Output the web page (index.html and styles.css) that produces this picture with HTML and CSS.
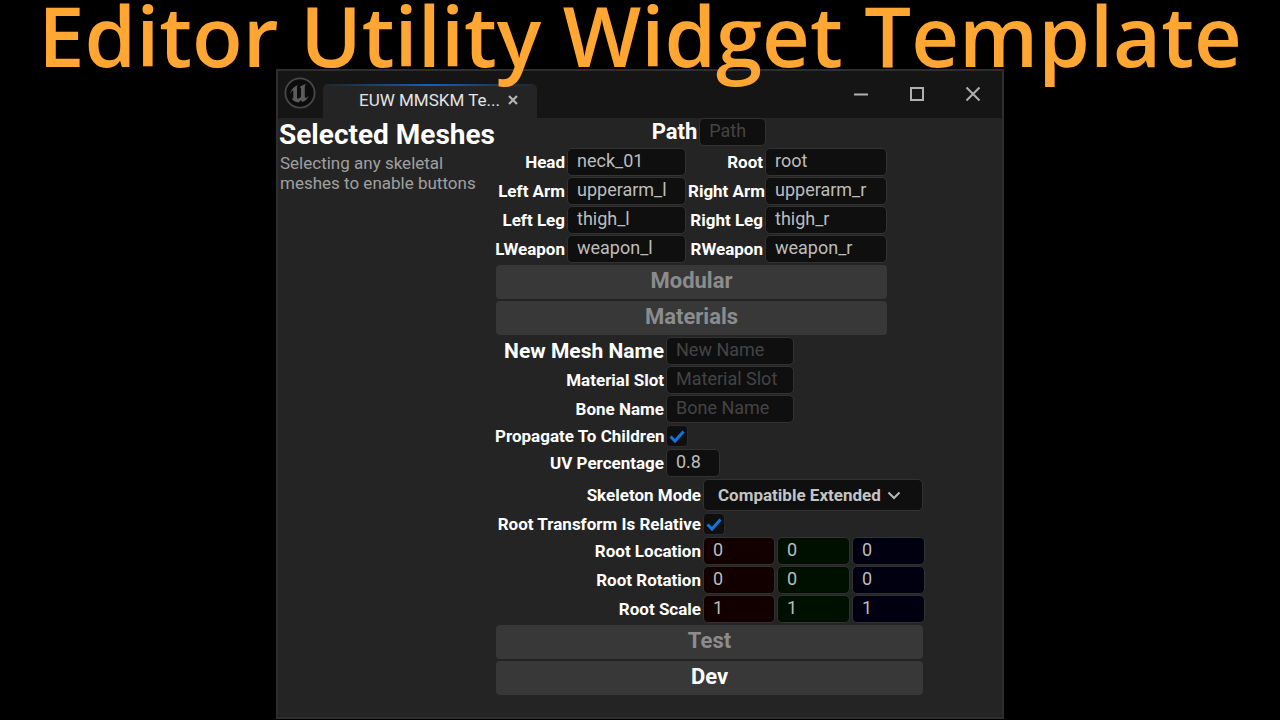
FILE: index.html
```html
<!DOCTYPE html>
<html lang="en">
<head>
<meta charset="utf-8">
<meta name="viewport" content="width=device-width, initial-scale=1">
<title>Editor Utility Widget Template</title>
<link rel="stylesheet" href="styles.css">
</head>
<body>
<h1 class="banner">Editor Utility Widget Template</h1>
<main class="window">
  <header class="titlebar">
    <svg class="logo" viewBox="0 0 32 32" aria-hidden="true">
      <circle cx="16" cy="16" r="14.6" fill="#0c0c0c" stroke="#484848" stroke-width="1.8"/>
      <path d="M6 17.5C7 12.500 10 9.500 14.500 7.800C13 9 13 9.600 13 10.500V20.500C13 21.800 14.300 22 15.500 21L17 19.700V11.500C17 10.500 16.300 10.300 15.500 10.500C17 8.700 19.500 7.500 22.500 7C21 8.200 20.800 9 20.800 10V19.800C20.800 21 22 21.500 24.500 19C23.500 21.800 21.500 24 18.500 25L16.800 23.200L14.500 25.400C11.500 25.200 9 23.700 7.500 21.500C9 21.900 9.300 21.200 9.300 20V14C9.300 12.800 7.500 14 6 17.500Z" fill="#5c5c5c"/>
    </svg>
    <div class="tab">
      <span class="tab-name">EUW MMSKM Te...</span>
      <button class="tab-close" type="button" aria-label="Close tab">
        <svg viewBox="0 0 10 10" width="10" height="10"><path d="M1 1L9 9M9 1L1 9" stroke="#b4b4b4" stroke-width="2.2"/></svg>
      </button>
    </div>
    <div class="controls">
      <button class="control" type="button" aria-label="Minimize"><svg viewBox="0 0 16 16"><path d="M1 8.500H15" stroke="#b0b0b0" stroke-width="2"/></svg></button>
      <button class="control" type="button" aria-label="Maximize"><svg viewBox="0 0 16 16"><rect x="2" y="2" width="12" height="12" fill="none" stroke="#b0b0b0" stroke-width="2"/></svg></button>
      <button class="control" type="button" aria-label="Close"><svg viewBox="0 0 16 16"><path d="M1.500 1.500L14.500 14.500M14.500 1.500L1.500 14.500" stroke="#b0b0b0" stroke-width="2"/></svg></button>
    </div>
  </header>
  <div class="body">
    <section class="selection">
      <h2 class="heading">Selected Meshes</h2>
      <p class="hint">Selecting any skeletal meshes to enable buttons</p>
    </section>
    <form class="form">
      <div class="path-row">
        <label class="label label-large" for="path">Path</label>
        <input class="field" id="path" type="text" placeholder="Path">
      </div>
      <div class="bones">
        <label class="label" for="head">Head</label><input class="field" id="head" type="text" value="neck_01">
        <label class="label" for="root">Root</label><input class="field" id="root" type="text" value="root">
        <label class="label" for="larm">Left Arm</label><input class="field" id="larm" type="text" value="upperarm_l">
        <label class="label" for="rarm">Right Arm</label><input class="field" id="rarm" type="text" value="upperarm_r">
        <label class="label" for="lleg">Left Leg</label><input class="field" id="lleg" type="text" value="thigh_l">
        <label class="label" for="rleg">Right Leg</label><input class="field" id="rleg" type="text" value="thigh_r">
        <label class="label" for="lweapon">LWeapon</label><input class="field" id="lweapon" type="text" value="weapon_l">
        <label class="label" for="rweapon">RWeapon</label><input class="field" id="rweapon" type="text" value="weapon_r">
      </div>
      <div class="actions actions-mesh">
        <button class="action" type="button" disabled>Modular</button>
        <button class="action" type="button" disabled>Materials</button>
      </div>
      <div class="mesh">
        <label class="label label-large" for="mesh-name">New Mesh Name</label><input class="field" id="mesh-name" type="text" placeholder="New Name">
        <label class="label" for="slot">Material Slot</label><input class="field" id="slot" type="text" placeholder="Material Slot">
        <label class="label" for="bone">Bone Name</label><input class="field" id="bone" type="text" placeholder="Bone Name">
      </div>
      <div class="options">
        <label class="label" for="propagate">Propagate To Children</label>
        <span class="check">
          <input class="check-box" id="propagate" type="checkbox" checked>
          <svg class="check-mark" viewBox="0 0 22 22"><path d="M4.500 11.500L9 16L17.500 6.500" fill="none" stroke="#0f76e0" stroke-width="3"/></svg>
        </span>
        <label class="label" for="uv">UV Percentage</label><input class="field field-short" id="uv" type="text" value="0.8">
      </div>
      <div class="transform">
        <label class="label" for="mode">Skeleton Mode</label>
        <span class="select">
          <select class="select-box" id="mode"><option>Compatible Extended</option></select>
          <svg class="select-arrow" viewBox="0 0 14 10"><path d="M1.500 2.500L7 8L12.500 2.500" fill="none" stroke="#b8b8b8" stroke-width="2"/></svg>
        </span>
        <label class="label" for="relative">Root Transform Is Relative</label>
        <span class="check">
          <input class="check-box" id="relative" type="checkbox" checked>
          <svg class="check-mark" viewBox="0 0 22 22"><path d="M4.500 11.500L9 16L17.500 6.500" fill="none" stroke="#0f76e0" stroke-width="3"/></svg>
        </span>
      </div>
      <div class="vectors">
        <label class="label" for="location-x">Root Location</label>
        <input class="field axis-x" id="location-x" type="text" value="0">
        <input class="field axis-y" type="text" value="0" aria-label="Root Location Y">
        <input class="field axis-z" type="text" value="0" aria-label="Root Location Z">
        <label class="label" for="rotation-x">Root Rotation</label>
        <input class="field axis-x" id="rotation-x" type="text" value="0">
        <input class="field axis-y" type="text" value="0" aria-label="Root Rotation Y">
        <input class="field axis-z" type="text" value="0" aria-label="Root Rotation Z">
        <label class="label" for="scale-x">Root Scale</label>
        <input class="field axis-x" id="scale-x" type="text" value="1">
        <input class="field axis-y" type="text" value="1" aria-label="Root Scale Y">
        <input class="field axis-z" type="text" value="1" aria-label="Root Scale Z">
      </div>
      <div class="actions">
        <button class="action" type="button" disabled>Test</button>
        <button class="action" type="button">Dev</button>
      </div>
    </form>
  </div>
</main>
</body>
</html>
```
FILE: styles.css
```css
* {
  box-sizing: border-box;
}

body {
  margin: 0;
  background: #000;
  color: #fff;
  font-family: Roboto, "Liberation Sans", sans-serif;
}

button,
input,
select {
  margin: 0;
  font-family: inherit;
}

.banner {
  position: relative;
  z-index: 1;
  margin: 0;
  color: #ffa633;
  font-family: "Open Sans", "Noto Sans", sans-serif;
  font-size: 83px;
  font-weight: 600;
  line-height: 69px;
  text-align: center;
  white-space: nowrap;
}

.window {
  max-width: 728px;
  margin: 0 auto;
  background: #242424;
  border: 2px solid #2e2e2e;
}

.titlebar {
  display: flex;
  height: 47px;
  background: #151515;
}

.logo {
  width: 32px;
  height: 32px;
  margin: 6px 7px 0 6px;
}

.tab {
  display: flex;
  align-items: center;
  align-self: flex-end;
  gap: 8px;
  height: 34px;
  padding: 0 19px 2px 36px;
  background: linear-gradient(90deg, #242424, #1160c4 50%, #242424) top / 100% 2px no-repeat #242424;
  border-radius: 5px 5px 0 0;
}

.tab-name {
  color: #e4e4e4;
  font-size: 17px;
}

.tab-close {
  display: flex;
  padding: 0;
  background: none;
  border: 0;
}

.controls {
  display: flex;
  gap: 40px;
  margin: 15px 21px 0 auto;
}

.control {
  width: 16px;
  height: 16px;
  padding: 0;
  background: none;
  border: 0;
}

.control svg {
  display: block;
}

.body {
  display: grid;
  grid-template-columns: 217px auto;
  justify-content: start;
  padding: 0 0 22px;
}

.heading {
  margin: 0;
  padding: 1px 1px 0;
  font-size: 28px;
  line-height: 32px;
  white-space: nowrap;
}

.hint {
  margin: 2px 0 0 2px;
  color: #a0a0a0;
  font-size: 17px;
  line-height: 20px;
}

.form {
  display: flex;
  flex-direction: column;
  gap: 2px;
  width: 428px;
}

.label {
  font-size: 17px;
  font-weight: 700;
  line-height: 22px;
  text-align: right;
  white-space: nowrap;
}

.label-large {
  font-size: 21px;
}

.path-row .label-large {
  font-size: 22px;
}

.field {
  width: 100%;
  min-width: 0;
  height: 28px;
  padding: 0 9px 4px;
  background: #0f0f0f;
  border: 1px solid #323232;
  border-radius: 5px;
  color: #bdbdbd;
  font-size: 18px;
}

.field::placeholder {
  color: #444;
}

.field-short {
  width: 54px;
}

.path-row {
  display: flex;
  align-items: center;
  justify-content: center;
  gap: 2px;
}

.path-row .field {
  width: 67px;
}

.bones,
.mesh,
.options,
.transform,
.vectors {
  display: grid;
  align-items: center;
  justify-content: start;
  gap: 2px;
}

.bones {
  grid-template-columns: 70px 119px 75px 122px;
  row-gap: 1px;
}

.mesh {
  grid-template-columns: 169px 128px;
  row-gap: 1px;
}

.options {
  grid-template-columns: 169px 128px;
}

.transform {
  grid-template-columns: 206px 220px;
}

.vectors {
  grid-template-columns: 206px 72px 73px 73px;
  row-gap: 1px;
}

.actions {
  display: flex;
  flex-direction: column;
  gap: 2px;
  padding: 0 0 0 1px;
}

.actions-mesh {
  width: 392px;
}

.action {
  height: 34px;
  padding: 0 0 4px;
  background: #383838;
  border: 0;
  border-radius: 4px;
  color: #fff;
  font-size: 22px;
  font-weight: 700;
}

.action:disabled {
  color: #8c8c8c;
}

.check,
.select {
  display: grid;
  align-items: center;
}

.check {
  justify-content: start;
}

.check > *,
.select > * {
  grid-area: 1 / 1;
}

.check-box {
  width: 22px;
  height: 22px;
  appearance: none;
  background: #0f0f0f;
  border: 1px solid #2c2c2c;
  border-radius: 4px;
}

.check-mark {
  width: 22px;
  height: 22px;
  pointer-events: none;
}

.select-box {
  width: 100%;
  height: 32px;
  padding: 0 36px 0 14px;
  appearance: none;
  background: #0f0f0f;
  border: 1px solid #323232;
  border-radius: 5px;
  color: #c4c4c4;
  font-size: 17px;
  font-weight: 700;
}

.select-arrow {
  justify-self: end;
  width: 14px;
  height: 10px;
  margin-right: 22px;
  pointer-events: none;
}

.axis-x {
  background: #120000;
}

.axis-y {
  background: #001000;
}

.axis-z {
  background: #000010;
}
```
